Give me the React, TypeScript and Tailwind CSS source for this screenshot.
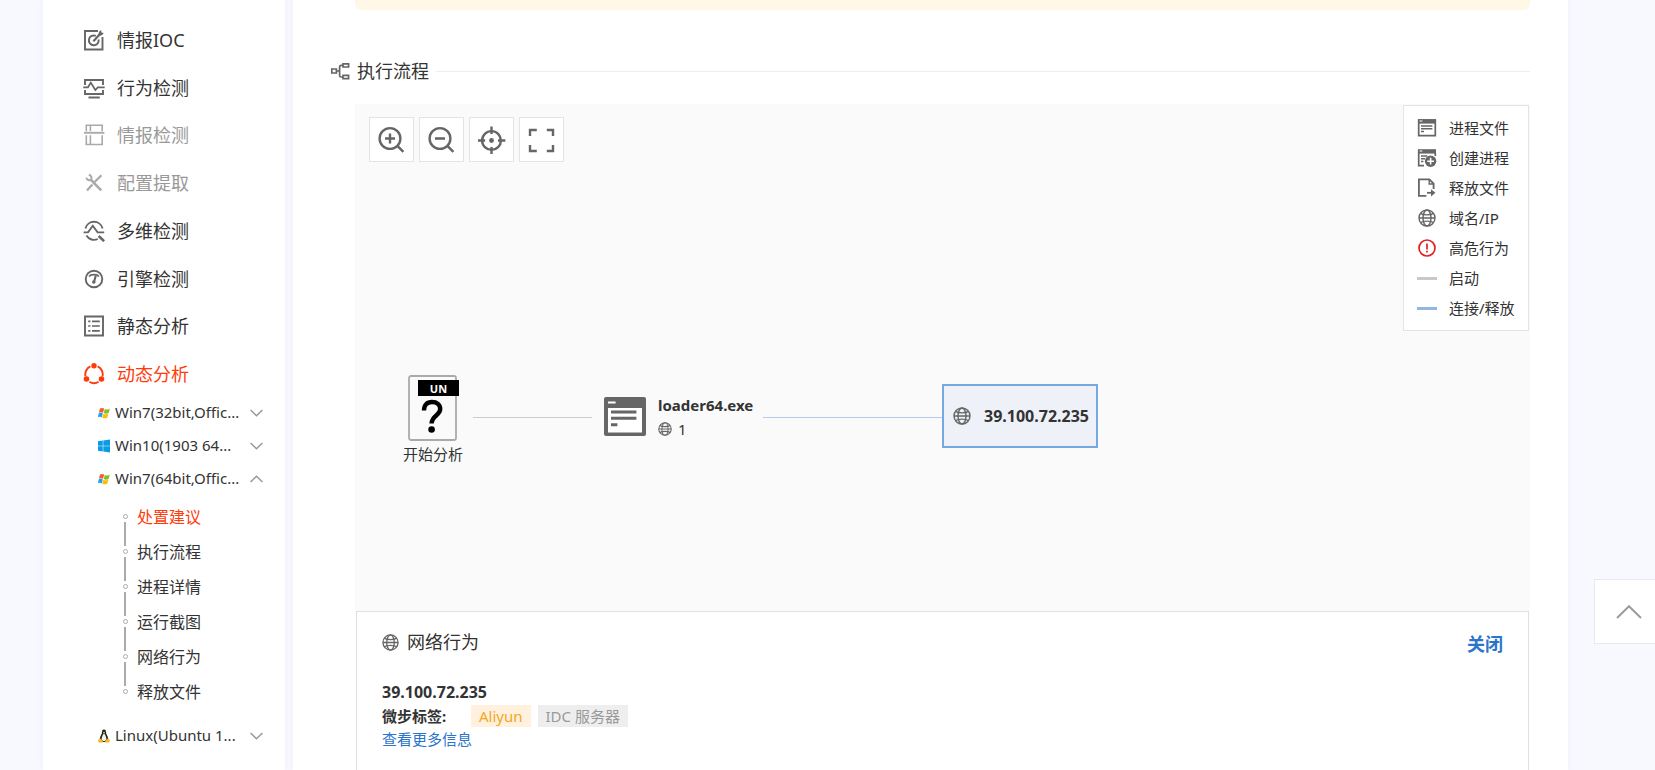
import React from "react";

type IconProps = { className?: string };

const NavSvg = ({ children }: { children: React.ReactNode }) => (
  <svg className="h-[22px] w-[22px] shrink-0" viewBox="0 0 22 22" fill="none" stroke="currentColor" strokeWidth="1.9" aria-hidden="true">
    {children}
  </svg>
);

const IocIcon = () => (
  <NavSvg>
    <path d="M15 2H2V20.500H19.500V8" />
    <path d="M12.8 6.9A4.9 4.9 0 1 0 15.6 10.5" />
    <path d="M10.4 12.2L17 5" strokeWidth="2.2" />
    <path d="M15.2 6L16.2 2.6L18.2 1L18.4 3.6L20.8 4L19.2 6L16.4 6.9Z" fill="currentColor" stroke="none" />
  </NavSvg>
);
const BehaviorIcon = () => (
  <NavSvg>
    <path d="M2 8V3H20V8M2 13V17H20V13M5.500 20.500H16.800" />
    <path d="M0.3 10.3H5L7.8 5.6L12.3 13L14.8 10.3H21.7" strokeWidth="1.7" />
  </NavSvg>
);
const IntelIcon = () => (
  <NavSvg>
    <path d="M3.3 7.2V1.3H19.2V7.2M7.4 1V7.2M3.3 11.2V20.5H19.2V11.2M7.4 11.2V20.3" strokeWidth="1.6" />
    <path d="M1 8.8H21.4" strokeWidth="1.9" />
  </NavSvg>
);
const ToolsIcon = () => (
  <NavSvg>
    <path d="M18.4 3.2L11.6 10M9.4 12.4L4 18.4" strokeWidth="2.3" />
    <path d="M7.2 7.2L18.2 18.4" strokeWidth="2.6" />
    <path d="M3.4 5.6C3.8 8.2 6.6 8.8 8.2 7.6C9 5.4 8.2 3.4 5.8 2.8" strokeWidth="2" />
  </NavSvg>
);
const MultiIcon = () => (
  <NavSvg>
    <path d="M2.4 8.4A8.9 8.9 0 0 1 19.6 8.4M3.4 15.6A8.9 8.9 0 0 0 14.8 19" />
    <path d="M0.6 12.4H5L9.8 5.8L14.6 12.4H21.2" />
    <path d="M15.6 16L21.2 21.2" strokeWidth="2.6" />
  </NavSvg>
);
const EngineIcon = () => (
  <NavSvg>
    <circle cx="11" cy="11" r="8.3" />
    <path d="M6.2 8.6C7.2 6 14.8 6 15.8 8.6" strokeWidth="1.6" />
    <path d="M12.8 7.4L11.3 13" strokeWidth="2.1" />
    <circle cx="10.8" cy="14" r="1.8" fill="currentColor" stroke="none" />
  </NavSvg>
);
const StaticIcon = () => (
  <NavSvg>
    <path d="M2 1.500H20V20.500H2Z" />
    <path d="M5.2 6.4H7.4M5.2 11H7.4M5.2 15.8H7.4M9 6.4H16.8M9 11H16.8M9 15.8H16.8" strokeWidth="1.7" />
  </NavSvg>
);
const DynamicIcon = () => (
  <NavSvg>
    <path d="M7.4 3.4A8.8 8.8 0 0 0 2.5 13.4M14.6 3.4A8.8 8.8 0 0 1 19.5 13.4M6.4 18.8A9 9 0 0 0 15.6 18.8" />
    <g fill="currentColor" stroke="none">
      <circle cx="11" cy="2.8" r="2.7" />
      <circle cx="3.5" cy="16" r="2.8" />
      <circle cx="18.5" cy="16" r="2.8" />
    </g>
  </NavSvg>
);

const Globe = ({ className }: IconProps) => (
  <svg className={className} viewBox="0 0 18 18" fill="none" stroke="#666" strokeWidth="1.4" aria-hidden="true">
    <circle cx="9" cy="9" r="8" />
    <ellipse cx="9" cy="9" rx="4" ry="8" />
    <path d="M1 9H17M2.4 4.4C5.5 6.4 12.5 6.4 15.6 4.4M2.4 13.6C5.5 11.6 12.5 11.6 15.6 13.6" />
  </svg>
);

const Win7Icon = () => (
  <svg className="h-3 w-3 shrink-0" viewBox="0 0 12 12" aria-hidden="true">
    <path d="M2 1.6C3.4.8 4.8.8 6.2 1.6L5 5.8C3.6 5 2.2 5 .9 5.7Z" fill="#f1602c" />
    <path d="M6.8 1.9C8.2 2.7 10.2 2.6 11.8 1.8L10.6 6C9.2 6.9 7.2 6.9 5.7 6.1Z" fill="#86bf20" />
    <path d="M.8 6.3C2.2 5.6 3.6 5.6 4.8 6.4L3.7 10.4C2.4 9.7 1.2 9.7-.2 10.3Z" fill="#1fa0e8" />
    <path d="M5.4 6.8C7 7.5 8.8 7.5 10.4 6.7L9.2 10.7C7.6 11.6 5.8 11.5 4.3 10.8Z" fill="#fdbb0a" />
  </svg>
);
const Win10Icon = () => (
  <svg className="h-3 w-3 shrink-0 overflow-visible" viewBox="0 0 12 12" fill="#0a9ae6" aria-hidden="true">
    <path d="M0 1.2L4.8.5V5.7H0ZM5.3.4L12-.5V5.7H5.3ZM0 6.2H4.8V11.5L0 10.8ZM5.3 6.2H12V12.500L5.3 11.6Z" />
  </svg>
);
const LinuxIcon = () => (
  <svg className="h-[14px] w-3 shrink-0" viewBox="0 0 12 14" aria-hidden="true">
    <path d="M6 .4C4.3.4 4 1.8 4 3.2C4 5.4 1.6 7.4 1.6 11L4 13H8L10.4 11C10.4 7.4 8 5.4 8 3.2C8 1.8 7.7.4 6 .4Z" fill="#222" />
    <path d="M6 4.6C4.8 5.4 3.6 8.6 3.6 10.4L5 12H7L8.4 10.4C8.4 8.6 7.2 5.4 6 4.6Z" fill="#f4f4f4" />
    <path d="M4.8 3.2L6 2.8L7.2 3.2L6 4.8Z" fill="#f5b912" />
    <path d="M.4 10.4L2.6 9.4L5.2 12.4L4 13.8L.4 13.2ZM11.6 10.4L9.4 9.4L6.8 12.4L8 13.8L11.6 13.2Z" fill="#f5b912" />
  </svg>
);

const Chevron = ({ up }: { up?: boolean }) => (
  <svg className="h-2 w-[13px] shrink-0" viewBox="0 0 13 8" fill="none" stroke="#999" strokeWidth="1.5" aria-hidden="true">
    <path d={up ? "M.6 7L6.5 1.2L12.4 7" : "M.6 1L6.5 6.8L12.4 1"} />
  </svg>
);

const ProcessIcon = ({ className }: IconProps) => (
  <svg className={className} viewBox="0 0 42 39" aria-hidden="true">
    <rect width="42" height="39" rx="2" fill="#666" />
    <path d="M4 4.4H11.6V6.4H4ZM4 11H38V35.4H4Z" fill="#fff" />
    <path d="M7 13.4H32.4V16.4H7ZM7 19.8H32.4V22.8H7ZM7 26.2H13.4V29.2H7Z" fill="#666" />
  </svg>
);
const LegendProcess = () => (
  <svg className="h-5 w-5" viewBox="0 0 20 20" fill="none" aria-hidden="true">
    <path d="M1.7 2V17.6H18.3V2Z" stroke="#666" strokeWidth="1.7" />
    <path d="M1 1.2H19V5.6H1Z" fill="#666" />
    <path d="M2.6 3H5.4" stroke="#fff" />
    <path d="M4 8H15.4M4 10.8H15.4M4 13.6H7" stroke="#666" strokeWidth="1.5" />
  </svg>
);
const LegendCreate = () => (
  <svg className="h-5 w-5" viewBox="0 0 20 20" fill="none" aria-hidden="true">
    <path d="M1.7 2V17.6H7M18.3 5V8" stroke="#666" strokeWidth="1.7" />
    <path d="M1 1.2H19V5.6H1Z" fill="#666" />
    <path d="M2.6 3H5.4" stroke="#fff" />
    <path d="M4 8H10.4M4 10.8H8M4 13.6H6.4" stroke="#666" strokeWidth="1.5" />
    <circle cx="13.6" cy="13.2" r="5.7" fill="#666" />
    <path d="M13.6 9.8V16.6M10.2 13.2H17" stroke="#fff" strokeWidth="1.6" />
  </svg>
);
const LegendDrop = () => (
  <svg className="h-5 w-5" viewBox="0 0 20 20" fill="none" stroke="#666" strokeWidth="1.8" aria-hidden="true">
    <path d="M9.4 17.8H1.9V1.4H12.4L16.6 5.6V11" />
    <path d="M12.2 1.6V6H16.6" strokeWidth="1.4" />
    <path d="M10 14.8H16" />
    <path d="M14 11.2L18.4 14.8L14 18.4Z" fill="#666" stroke="none" />
  </svg>
);
const LegendRisk = () => (
  <svg className="h-5 w-5" viewBox="0 0 20 20" fill="none" stroke="#e02020" strokeWidth="1.7" aria-hidden="true">
    <circle cx="10" cy="10" r="8" />
    <path d="M10 5.6V11.4M10 12.8V14.4" strokeWidth="1.7" />
  </svg>
);

const navItems = [
  { label: "情报IOC", Icon: IocIcon, tone: "normal" },
  { label: "行为检测", Icon: BehaviorIcon, tone: "normal" },
  { label: "情报检测", Icon: IntelIcon, tone: "muted" },
  { label: "配置提取", Icon: ToolsIcon, tone: "muted" },
  { label: "多维检测", Icon: MultiIcon, tone: "normal" },
  { label: "引擎检测", Icon: EngineIcon, tone: "normal" },
  { label: "静态分析", Icon: StaticIcon, tone: "normal" },
  { label: "动态分析", Icon: DynamicIcon, tone: "active" },
];
const iconTone: Record<string, string> = { normal: "text-[#666]", muted: "text-[#aaa]", active: "text-[#ff3b0a]" };
const textTone: Record<string, string> = { normal: "text-[#333]", muted: "text-[#999]", active: "text-[#ff3b0a]" };

const steps = ["处置建议", "执行流程", "进程详情", "运行截图", "网络行为", "释放文件"];

const legend = [
  { label: "进程文件", mark: <LegendProcess /> },
  { label: "创建进程", mark: <LegendCreate /> },
  { label: "释放文件", mark: <LegendDrop /> },
  { label: "域名/IP", mark: <Globe className="mx-px h-[18px] w-[18px]" /> },
  { label: "高危行为", mark: <LegendRisk /> },
  { label: "启动", mark: <span className="h-[3px] w-5 bg-[#c8c8c8]" /> },
  { label: "连接/释放", mark: <span className="h-[3px] w-5 bg-[#93b7e3]" /> },
];

const tools = [
  {
    label: "放大",
    art: (
      <>
        <circle cx="12" cy="12.500" r="10.4" />
        <path d="M12 7.500V17.500M7 12.500H17M19.4 19.8L25.4 25.8" />
      </>
    ),
  },
  {
    label: "缩小",
    art: (
      <>
        <circle cx="12" cy="12.500" r="10.4" />
        <path d="M7 12.500H17M19.4 19.8L25.4 25.8" />
      </>
    ),
  },
  {
    label: "居中",
    art: (
      <>
        <circle cx="13.500" cy="14.500" r="9.4" />
        <path d="M13.500 .5V8M13.500 21V28M0 14.500H7.1M20 14.500H27.4" />
        <circle cx="13.500" cy="14.500" r="2.4" fill="#666" stroke="none" />
      </>
    ),
  },
  { label: "全屏", art: <path d="M2 10.1V4H8.8M18.8 4H25V10.1M25 18.9V25H18.8M8.8 25H2V18.9" /> },
];

function OsRow({ icon, label, open }: { icon: React.ReactNode; label: string; open?: boolean }) {
  return (
    <button type="button" aria-expanded={!!open} className="flex h-[33px] w-full items-center pr-[22px] pl-[55px] text-[15px]">
      {icon}
      <span className="ml-[5px] flex-1 text-left whitespace-nowrap">{label}</span>
      <Chevron up={open} />
    </button>
  );
}

function Sidebar() {
  return (
    <nav className="w-[242px] shrink-0 bg-white pt-4 shadow-[0_0_6px_rgba(60,70,120,0.06)]">
      <ul className="-mb-[2px] grid h-[382px] auto-rows-fr">
        {navItems.map(({ label, Icon, tone }) => (
          <li key={label} className="flex items-center">
            <a href="#" className="flex w-full items-center gap-3 pl-10 text-lg">
              <span className={iconTone[tone]}>
                <Icon />
              </span>
              <span className={textTone[tone]}>{label}</span>
            </a>
          </li>
        ))}
      </ul>
      <OsRow icon={<Win7Icon />} label="Win7(32bit,Offic..." />
      <OsRow icon={<Win10Icon />} label="Win10(1903 64..." />
      <OsRow icon={<Win7Icon />} label="Win7(64bit,Offic..." open />
      <ul className="mt-1 mb-[10px] pl-20">
        {steps.map((step, i) => (
          <li key={step} className="flex h-[35px] gap-[9px]">
            <span className="flex w-[5px] flex-col gap-[3px]">
              <span className={i === 0 ? "ml-px w-[2px] flex-1" : "ml-px w-[2px] flex-1 bg-[#aaa]"} />
              <span className="h-[5px] w-[5px] rounded-full border border-[#aaa]" />
              <span className={i === steps.length - 1 ? "ml-px w-[2px] flex-1" : "ml-px w-[2px] flex-1 bg-[#aaa]"} />
            </span>
            <a href="#" className={i === 0 ? "flex items-center text-base text-[#ff3b0a]" : "flex items-center text-base"}>
              {step}
            </a>
          </li>
        ))}
      </ul>
      <OsRow icon={<LinuxIcon />} label="Linux(Ubuntu 1..." />
    </nav>
  );
}

function FlowCanvas() {
  return (
    <div className="relative flex h-[507px] items-start justify-between bg-[#fafafa]">
      <div className="flex gap-[5px] pt-[13px] pl-[14px]">
        {tools.map((t) => (
          <button key={t.label} type="button" aria-label={t.label} className="flex h-[45px] w-[45px] items-center justify-center border border-[#e4e4e4] bg-white">
            <svg className="h-7 w-7" viewBox="0 0 28 28" fill="none" stroke="#666" strokeWidth="2.4" aria-hidden="true">
              {t.art}
            </svg>
          </button>
        ))}
      </div>
      <ul className="mt-px mr-px w-[126px] border border-[#e4e4e4] bg-white py-[7px] pl-[13px]">
        {legend.map((l) => (
          <li key={l.label} className="flex h-[30px] items-center gap-3 text-[15px] whitespace-nowrap">
            {l.mark}
            {l.label}
          </li>
        ))}
      </ul>

      <div className="absolute top-[271px] left-[38px] flex w-20 flex-col items-center">
        <svg className="h-[66px] w-[52px]" viewBox="0 0 52 66" aria-hidden="true">
          <rect x="2" y="1" width="47" height="64" rx="2" fill="#fafafa" stroke="#aaa" strokeWidth="1.8" />
          <rect x="11" y="5" width="41" height="16" fill="#000" />
          <text x="31.500" y="17.500" fill="#fff" fontSize="11" fontWeight="700" textAnchor="middle" fontFamily="Noto Sans, sans-serif">
            UN
          </text>
          <path d="M17 35.500C17 30 20 27 25 27C30 27 33.200 29.700 33.200 34.100C33.200 40.500 24.800 40.700 24.600 48.500" fill="none" stroke="#000" strokeWidth="4.400" />
          <circle cx="24.600" cy="54.500" r="3.300" fill="#000" />
        </svg>
        <span className="mt-[3px] text-[15px] leading-5">开始分析</span>
      </div>
      <span className="absolute top-[313px] left-[118px] h-px w-[119px] bg-[#ccc]" />
      <div className="absolute top-[289px] left-[249px] flex gap-3">
        <ProcessIcon className="mt-1 h-[39px] w-[42px]" />
        <div className="leading-6">
          <div className="text-[15px] font-bold">loader64.exe</div>
          <div className="flex items-center gap-[6px] text-[15px]">
            <Globe className="h-[14px] w-[14px]" />1
          </div>
        </div>
      </div>
      <span className="absolute top-[313px] left-[408px] h-px w-[179px] bg-[#b5cdec]" />
      <button type="button" className="absolute top-[280px] left-[587px] flex h-[64px] w-[156px] items-center gap-[13px] border-2 border-[#77a8e2] bg-[#eef1f7] pl-[9px] text-base font-bold">
        <Globe className="h-[18px] w-[18px] shrink-0" />
        39.100.72.235
      </button>
    </div>
  );
}

export default function App() {
  return (
    <div className="relative flex min-h-screen bg-[#f8f9ff] pr-[87px] pl-[43px] font-['Noto_Sans','Noto_Sans_CJK_SC',sans-serif] text-[#333]">
      <Sidebar />
      <main className="ml-2 flex min-w-0 flex-1 flex-col bg-white pr-[38px] pl-[37px] shadow-[0_0_6px_rgba(60,70,120,0.06)]">
        <div className="ml-[25px] h-[10px] rounded-b-md bg-[#fff8e6]" />
        <div className="mt-[45px] flex h-8 items-center">
          <svg className="h-[18px] w-5" viewBox="0 0 20 18" fill="none" stroke="#666" strokeWidth="1.7" aria-hidden="true">
            <path d="M1.800 7H6.400V11H1.800ZM13 1.800H18.600V5H13ZM13 13.400H18.600V16.600H13ZM6.400 9H9.600M13 3.400H11.200Q9.600 3.400 9.600 5V13.400Q9.600 15 11.200 15H13" />
          </svg>
          <h2 className="ml-[7px] text-lg">执行流程</h2>
          <span className="ml-[7px] h-px flex-1 bg-[#eee]" />
        </div>
        <div className="mt-[17px] ml-[25px] flex flex-1 flex-col">
          <FlowCanvas />
          <section className="mx-px flex-1 border-x border-t border-[#e0e0e0] px-[25px] pt-[14px]">
            <div className="flex items-center justify-between text-lg">
              <h3 className="flex items-center gap-2">
                <Globe className="h-[17px] w-[17px]" />
                网络行为
              </h3>
              <button type="button" className="mt-1 font-bold text-[#2b74cc]">
                关闭
              </button>
            </div>
            <div className="mt-[22px] leading-6">
              <p className="font-bold">39.100.72.235</p>
              <div className="flex items-center text-[15px]">
                <span className="w-[89px] font-bold">微步标签:</span>
                <span className="bg-[#fff1dd] px-2 leading-[22px] text-[#f5a623]">Aliyun</span>
                <span className="ml-[7px] bg-[#eee] px-2 leading-[22px] text-[#999]">IDC 服务器</span>
              </div>
              <a href="#" className="block text-[15px] leading-[22px] text-[#2b74cc]">
                查看更多信息
              </a>
            </div>
          </section>
        </div>
      </main>
      <button type="button" aria-label="返回顶部" className="fixed right-0 bottom-[126px] flex h-[65px] w-[61px] items-center border border-r-0 border-[#e8e9ee] bg-white pl-[21px]">
        <svg className="h-[14px] w-[26px]" viewBox="0 0 26 14" fill="none" stroke="#999" strokeWidth="1.900" aria-hidden="true">
          <path d="M1 13L13 1.200L25 13" />
        </svg>
      </button>
    </div>
  );
}
